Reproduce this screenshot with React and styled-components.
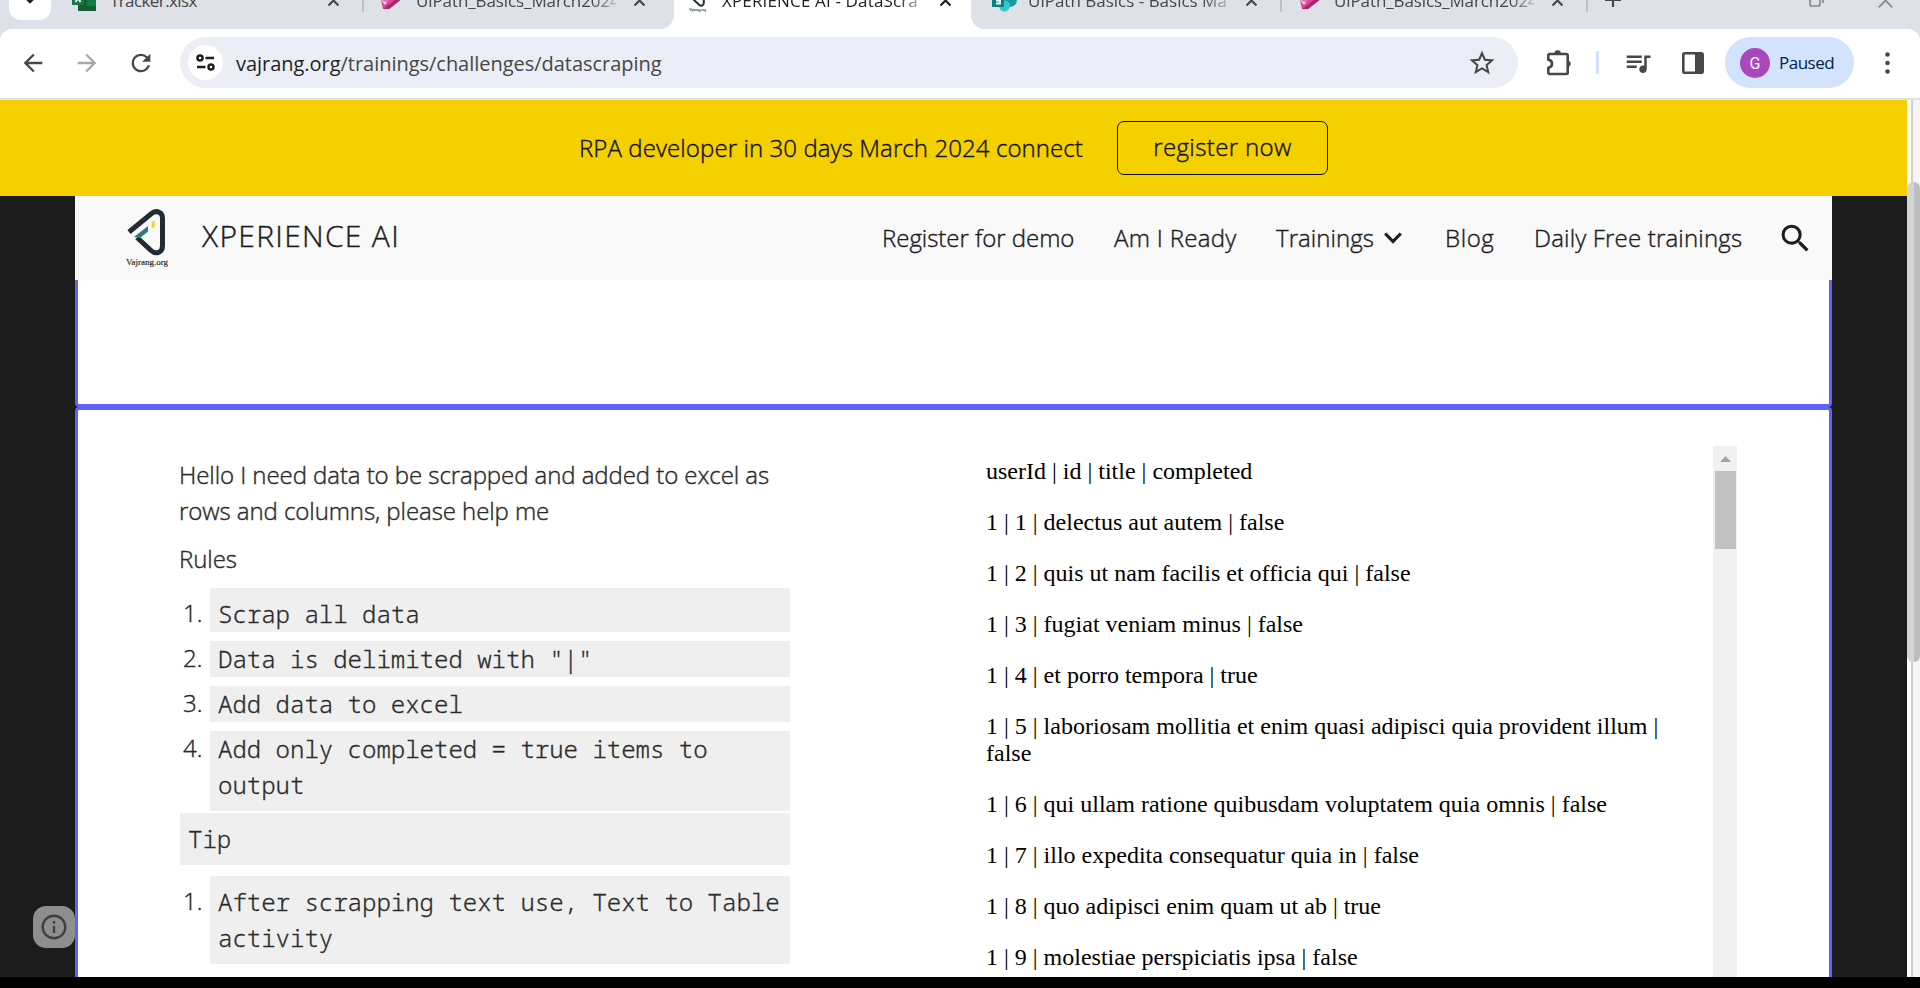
import React from 'react';
import styled, { createGlobalStyle } from 'styled-components';
import { MdArrowBack, MdArrowForward, MdRefresh, MdStarOutline, MdQueueMusic, MdSearch } from 'react-icons/md';

const GlobalStyle = createGlobalStyle`
  * { box-sizing: border-box; }
  body { margin: 0; background: #000; overflow: hidden; }
  svg { display: block; flex: none; }
`;

const Screen = styled.div`
  width: 1920px;
  height: 988px;
  display: flex;
  flex-direction: column;
  overflow: hidden;
  background: #000;
  font-family: "Open Sans", "Noto Sans", sans-serif;
`;

/* ---------- tab strip ---------- */
const TabStrip = styled.div`
  display: flex;
  height: 29px;
  flex: none;
  overflow: hidden;
  background: #fff;
`;
const TabGroup = styled.div`
  display: flex;
  height: 29px;
  background: #dee1e8;
  border-radius: ${p => (p.$side === 'left' ? '0 0 14px 0' : '0 0 0 14px')};
  ${p => (p.$side === 'right' ? 'flex: 1;' : 'width: 674px;')}
`;
const StripRow = styled.div`
  display: flex;
  align-items: center;
  height: 58px;
  margin-top: -29px;
  flex: 1;
`;
const ActiveStripRow = styled(StripRow)`
  flex: none;
  width: 297px;
`;
const TabSearch = styled.div`
  width: 42px;
  height: 40px;
  margin-left: 9px;
  border-radius: 12px;
  background: #fff;
  display: flex;
  align-items: center;
  justify-content: center;
`;
const Tab = styled.div`
  display: flex;
  align-items: center;
  width: ${p => p.$width}px;
  padding-left: ${p => p.$pad}px;
`;
const Favicon = styled.div`
  width: ${p => p.$slot}px;
  flex: none;
`;
const TabTitle = styled.div`
  width: 200px;
  margin-right: 18px;
  padding-top: 2px;
  flex: none;
  overflow: hidden;
  white-space: nowrap;
  font-size: 17px;
  line-height: 30px;
  letter-spacing: ${p => p.$spacing || 0}px;
  color: ${p => (p.$active ? '#1f1f1f' : '#474747')};
  mask-image: ${p => (p.$fade ? 'linear-gradient(to right, #000 176px, transparent 208px)' : 'none')};
`;
const Separator = styled.div`
  width: 2px;
  height: 24px;
  background: #c0c1c3;
`;
const NewTab = styled.div`
  margin-left: 17px;
`;
const WindowControls = styled.div`
  display: flex;
  align-items: center;
  gap: 54px;
  margin-left: auto;
  margin-right: 27px;
`;

/* ---------- toolbar ---------- */
const ToolbarWrap = styled.div`
  background: #dee1e8;
  flex: none;
`;
const Toolbar = styled.div`
  display: flex;
  align-items: center;
  height: 71px;
  padding: 0 19px 2px;
  background: #fff;
  border-bottom: 2px solid #e0e1e3;
  border-radius: 12px 12px 0 0;
  color: #474747;
`;
const NavButtons = styled.div`
  display: flex;
  align-items: center;
  gap: 26px;
  width: 161px;
`;
const Omnibox = styled.div`
  display: flex;
  align-items: center;
  width: 1338px;
  height: 51px;
  padding: 0 21px 0 8px;
  border-radius: 26px;
  background: #ebeef7;
`;
const SiteInfo = styled.div`
  display: flex;
  align-items: center;
  justify-content: center;
  width: 35px;
  height: 35px;
  border-radius: 50%;
  background: #fff;
`;
const Url = styled.div`
  flex: 1;
  padding: 2px 0 0 13px;
  font-size: 20px;
  line-height: 30px;
  letter-spacing: -0.03px;
  color: #474747;
`;
const UrlHost = styled.span`
  color: #1f1f1f;
`;
const ToolIcons = styled.div`
  display: flex;
  align-items: center;
  padding-left: 28px;
`;
const ToolDivider = styled.div`
  width: 3px;
  height: 23px;
  margin: 0 24px 0 24px;
  background: #d3e3fd;
  border-radius: 1px;
`;
const ToolSlot = styled.div`
  width: ${p => p.$width}px;
`;
const ProfileChip = styled.div`
  display: flex;
  align-items: center;
  gap: 9px;
  width: 129px;
  height: 51px;
  padding-left: 15px;
  border-radius: 26px;
  background: #d3e3fd;
  color: #041e49;
  font-size: 17px;
  letter-spacing: -0.5px;
`;
const Avatar = styled.div`
  width: 30px;
  height: 30px;
  border-radius: 50%;
  background: #ab47bc;
  color: #fff;
  font: 16px/31px Roboto, sans-serif;
  letter-spacing: 0;
  text-align: center;
`;
const MenuDots = styled.div`
  margin-left: 31px;
`;

/* ---------- page ---------- */
const Viewport = styled.div`
  display: flex;
  height: 877px;
  flex: none;
  overflow: hidden;
`;
const Page = styled.div`
  position: relative;
  width: 1907px;
  background: #1c1c1c;
`;
const Banner = styled.div`
  display: flex;
  height: 96px;
  padding: 21px 0 0 579px;
  background: #f5d000;
  color: #111;
  font-size: 24px;
  font-weight: 300;
  -webkit-text-stroke: 0.4px;
`;
const BannerText = styled.div`
  width: 538px;
  line-height: 54px;
  letter-spacing: 0.09px;
`;
const RegisterButton = styled.div`
  width: 211px;
  height: 54px;
  border: 1px solid #111;
  border-radius: 7px;
  line-height: 50px;
  text-align: center;
  letter-spacing: 0.38px;
`;
const Column = styled.div`
  padding: 0 75px;
`;
const SiteHeader = styled.div`
  display: flex;
  align-items: center;
  height: 84px;
  padding: 0 18px 0 51px;
  background: #f9f9f9;
  color: #1c1c1c;
  font-weight: 300;
`;
const Brand = styled.div`
  flex: 1;
  padding-left: 34px;
  font-size: 30px;
  line-height: 40px;
  letter-spacing: 1.3px;
  margin-bottom: 4px;
  -webkit-text-stroke: 0.4px;
`;
const Menu = styled.div`
  display: flex;
  align-items: center;
  font-size: 24px;
  line-height: 36px;
`;
const MenuItem = styled.div`
  display: flex;
  align-items: center;
  width: ${p => p.$width}px;
  letter-spacing: ${p => p.$spacing || 0}px;
  white-space: nowrap;
  -webkit-text-stroke: 0.4px;
`;
const Section = styled.div`
  border: 3px solid #6161ff;
  border-radius: 4px;
  background: #fff;
`;
const EmptySection = styled(Section)`
  height: 127px;
  border-top: 0;
  border-radius: 0 0 4px 4px;
`;
const ChallengeSection = styled(Section)`
  display: flex;
  height: 620px;
  padding: 36px 92px 0 102px;
`;
const Instructions = styled.div`
  width: 610px;
  padding-top: 11px;
  color: #2a2a2a;
  font-size: 24px;
  font-weight: 300;
  line-height: 36px;
`;
const Paragraph = styled.p`
  margin: 0 0 12px -1px;
  letter-spacing: -0.07px;
  -webkit-text-stroke: 0.4px;
`;
const Rules = styled.div`
  margin-top: -1px;
`;
const RuleRow = styled.div`
  display: flex;
  align-items: flex-start;
  margin-bottom: ${p => p.$after}px;
`;
const RuleNumber = styled.div`
  width: 30px;
  padding: ${p => (p.$first ? 7 : 0)}px 0 0 3px;
  margin-top: ${p => (p.$first ? 0 : -1)}px;
  letter-spacing: 0.1px;
  -webkit-text-stroke: 0.4px;
`;
const Code = styled.div`
  width: ${p => (p.$wide ? 610 : 580)}px;
  height: ${p => p.$height}px;
  padding: ${p => (p.$first ? 8 : 0)}px 0 0 8px;
  background: #efefef;
  color: #2a2a2a;
  font-family: "Noto Sans Mono", "Liberation Mono", monospace;
  font-weight: 300;
  white-space: pre-wrap;
  -webkit-text-stroke: 0.35px;
`;
const TodoFrame = styled.div`
  display: flex;
  margin-left: auto;
  width: 751px;
`;
const TodoList = styled.div`
  flex: 1;
  padding: 12px 50px 0 0;
  color: #000;
  font: 24px/27px "Liberation Serif", serif;
`;
const Todo = styled.p`
  margin: 0 0 24px;
`;
const FrameScroll = styled.div`
  width: 24px;
  padding: 10px 1px 0 2px;
  background: #f1f1f1;
`;
const FrameThumb = styled.div`
  height: 78px;
  margin-top: 9px;
  background: #c1c1c1;
`;
const PageScroll = styled.div`
  width: 13px;
  padding-top: 82px;
  background: linear-gradient(to right, #fff 4px, #cfcfcf 4px 6px, #f5f5f5 6px);
`;
const PageThumb = styled.div`
  height: 480px;
  border-radius: 6px;
  background: linear-gradient(to right, #d4d4d4 7px, #bdbdbd 7px);
`;
const InfoButton = styled.div`
  position: absolute;
  left: 33px;
  bottom: 29px;
  width: 42px;
  height: 42px;
  border-radius: 13px;
  background: #8e8e8e;
  display: flex;
  align-items: center;
  justify-content: center;
`;

const CloseIcon = ({ size = 11, color = '#474747', width = 2.2 }) => (
  <svg width={size} height={size} viewBox="0 0 11 11">
    <path d="M.5.5l10 10M10.500.5l-10 10" stroke={color} strokeWidth={width} />
  </svg>
);
const ExcelIcon = () => (
  <svg width="24" height="22" viewBox="0 0 24 22">
    <path d="M6 0h18v22H6z" fill="#21a366" />
    <path d="M6 11h9v11H6z" fill="#185c37" />
    <path d="M15 11h9v11h-9z" fill="#107c41" />
    <path d="M6 17h18v5H6z" fill="#185c37" />
    <path d="M0 0h12v16H0z" fill="#107c41" />
    <path d="M3.500 5.500l5 7.500M8.500 5.500l-5 7.500" stroke="#fff" strokeWidth="1.900" />
  </svg>
);
const FlowIcon = () => (
  <svg width="22" height="19" viewBox="0 0 22 19">
    <path d="M0 9L9 0h12L9 13z" fill="#f06bb3" />
    <path d="M0 9l4 5L15 0h7v7L8 18H2z" fill="#e0449a" />
    <path d="M2 18L22 3v4L8 18z" fill="#a8286a" />
  </svg>
);
const SharePointIcon = () => (
  <svg width="25" height="24" viewBox="0 0 25 24">
    <circle cx="12" cy="7" r="7" fill="#036c70" />
    <circle cx="18" cy="12" r="7" fill="#1a9ba1" />
    <circle cx="12.500" cy="18" r="5.500" fill="#37c6d0" />
    <path d="M0 6h12v13H0z" fill="#038387" />
    <path d="M8 9.500H5v3h3v3H4" fill="none" stroke="#fff" strokeWidth="1.800" />
  </svg>
);
const BrandMark = ({ width }) => (
  <svg width={width} height={(width * 58) / 42} viewBox="0 0 42 58">
    <path d="M3 23L25.500 4.500C31 .5 36.500 3.500 36.500 9v28c0 6.500-6.500 9-11.500 4.500L11 28.500" fill="none" stroke="#212b36" strokeWidth="5" />
    <path d="M8 28L22 17v5.500L14 29z" fill="#2f7d78" />
    <path d="M25.700 13l3-1.500v6l-3 2z" fill="#f2d21b" />
    <text x="0" y="56" fontFamily="Liberation Serif" fontSize="9" fill="#222" stroke="#222" strokeWidth=".15" textLength="42" lengthAdjust="spacingAndGlyphs">Vajrang.org</text>
  </svg>
);
const TuneIcon = () => (
  <svg width="19" height="19" viewBox="0 0 19 19" fill="none" stroke="#1f1f1f" strokeWidth="2.500">
    <circle cx="4" cy="5" r="2.500" />
    <path d="M9.500 5H18M1 14h8.500" />
    <circle cx="15" cy="14" r="2.500" />
  </svg>
);
const ExtensionIcon = () => (
  <svg width="26" height="26" viewBox="0 0 26 26">
    <path d="M3.500 4h17a1.200 1.200 0 011.200 1.200v17.600a1.200 1.200 0 01-1.200 1.200h-17a1.200 1.200 0 01-1.200-1.200V18c5-1.500 5-7 0-8.500V5.200A1.200 1.200 0 013.500 4z" fill="none" stroke="#474747" strokeWidth="2.600" />
    <path d="M8.300 3.500a3.300 3.300 0 016.600 0zM22.200 10.500a3.400 3.400 0 010 6.600z" fill="#474747" />
  </svg>
);
const SidePanelIcon = () => (
  <svg width="22" height="22" viewBox="0 0 22 22">
    <rect x="1.300" y="1.300" width="19.400" height="19.400" rx="1.500" fill="none" stroke="#474747" strokeWidth="2.600" />
    <path d="M13 1h8v20h-8z" fill="#474747" />
  </svg>
);

const rules = [
  { text: 'Scrap all data', height: 44, after: 9, first: true },
  { text: 'Data is delimited with "|"', height: 36, after: 9 },
  { text: 'Add data to excel', height: 36, after: 9 },
  { text: 'Add only completed = true items to\noutput', height: 80, after: 2 },
];
const todos = [
  'userId | id | title | completed',
  '1 | 1 | delectus aut autem | false',
  '1 | 2 | quis ut nam facilis et officia qui | false',
  '1 | 3 | fugiat veniam minus | false',
  '1 | 4 | et porro tempora | true',
  '1 | 5 | laboriosam mollitia et enim quasi adipisci quia provident illum | false',
  '1 | 6 | qui ullam ratione quibusdam voluptatem quia omnis | false',
  '1 | 7 | illo expedita consequatur quia in | false',
  '1 | 8 | quo adipisci enim quam ut ab | true',
  '1 | 9 | molestiae perspiciatis ipsa | false',
];

export default function App() {
  return (
    <Screen>
      <GlobalStyle />
      <TabStrip>
        <TabGroup $side="left">
          <StripRow>
            <TabSearch>
              <svg width="12" height="8" viewBox="0 0 12 8"><path d="M1 1l5 5 5-5" fill="none" stroke="#1f1f1f" strokeWidth="2.400" /></svg>
            </TabSearch>
            <Tab $width={311} $pad={21}>
              <Favicon $slot={38}><ExcelIcon /></Favicon>
              <TabTitle $spacing={-0.6}>Tracker.xlsx</TabTitle>
              <CloseIcon />
            </Tab>
            <Separator />
            <Tab $width={310} $pad={17}>
              <Favicon $slot={35}><FlowIcon /></Favicon>
              <TabTitle $fade $spacing={-0.1}>UiPath_Basics_March2024</TabTitle>
              <CloseIcon />
            </Tab>
          </StripRow>
        </TabGroup>
        <ActiveStripRow>
          <Tab $width={297} $pad={15}>
            <Favicon $slot={33}><BrandMark width={17} /></Favicon>
            <TabTitle $fade $active $spacing={0.15}>XPERIENCE AI - DataScra</TabTitle>
            <CloseIcon color="#1f1f1f" />
          </Tab>
        </ActiveStripRow>
        <TabGroup $side="right">
          <StripRow>
            <Tab $width={309} $pad={21}>
              <Favicon $slot={36}><SharePointIcon /></Favicon>
              <TabTitle $fade>UiPath Basics - Basics Ma</TabTitle>
              <CloseIcon />
            </Tab>
            <Separator />
            <Tab $width={304} $pad={18}>
              <Favicon $slot={34}><FlowIcon /></Favicon>
              <TabTitle $fade $spacing={-0.1}>UiPath_Basics_March2024</TabTitle>
              <CloseIcon />
            </Tab>
            <Separator />
            <NewTab>
              <svg width="16" height="14" viewBox="0 0 16 14"><path d="M8 0v14M0 7h16" stroke="#474747" strokeWidth="2.200" /></svg>
            </NewTab>
            <WindowControls>
              <svg width="15" height="13" viewBox="0 0 15 13" fill="none" stroke="#888b90" strokeWidth="1.700">
                <rect x="1" y="2.500" width="10" height="9.500" rx="2" /><path d="M4 1h7q3 0 3 3v5" />
              </svg>
              <CloseIcon size={15} color="#888b90" width={1.3} />
            </WindowControls>
          </StripRow>
        </TabGroup>
      </TabStrip>

      <ToolbarWrap>
        <Toolbar>
          <NavButtons>
            <MdArrowBack size={28} />
            <MdArrowForward size={28} color="#a9a9a9" />
            <MdRefresh size={28} />
          </NavButtons>
          <Omnibox>
            <SiteInfo><TuneIcon /></SiteInfo>
            <Url><UrlHost>vajrang.org</UrlHost>/trainings/challenges/datascraping</Url>
            <MdStarOutline size={30} />
          </Omnibox>
          <ToolIcons>
            <ExtensionIcon />
            <ToolDivider />
            <ToolSlot $width={59}><MdQueueMusic size={30} /></ToolSlot>
            <ToolSlot $width={43}><SidePanelIcon /></ToolSlot>
            <ProfileChip><Avatar>G</Avatar>Paused</ProfileChip>
          </ToolIcons>
          <MenuDots>
            <svg width="5" height="22" viewBox="0 0 5 22" fill="#474747">
              <circle cx="2.500" cy="2.500" r="2.300" /><circle cx="2.500" cy="11" r="2.300" /><circle cx="2.500" cy="19.500" r="2.300" />
            </svg>
          </MenuDots>
        </Toolbar>
      </ToolbarWrap>

      <Viewport>
        <Page>
          <Banner>
            <BannerText>RPA developer in 30 days March 2024 connect</BannerText>
            <RegisterButton>register now</RegisterButton>
          </Banner>
          <Column>
            <SiteHeader>
              <BrandMark width={42} />
              <Brand>XPERIENCE AI</Brand>
              <Menu>
                <MenuItem $width={232} $spacing={-0.03}>Register for demo</MenuItem>
                <MenuItem $width={162} $spacing={0.3}>Am I Ready</MenuItem>
                <MenuItem $width={108} $spacing={0.05}>Trainings</MenuItem>
                <MenuItem $width={61}>
                  <svg width="18" height="12" viewBox="0 0 18 12"><path d="M1.200 1.500L9 9.500l7.800-8" fill="none" stroke="#1c1c1c" strokeWidth="3.200" /></svg>
                </MenuItem>
                <MenuItem $width={89} $spacing={0.6}>Blog</MenuItem>
                <MenuItem $width={243} $spacing={0.18}>Daily Free trainings</MenuItem>
                <MdSearch size={37} />
              </Menu>
            </SiteHeader>
            <EmptySection />
            <ChallengeSection>
              <Instructions>
                <Paragraph>Hello I need data to be scrapped and added to excel as<br />rows and columns, please help me</Paragraph>
                <Paragraph>Rules</Paragraph>
                <Rules>
                  {rules.map((r, i) => (
                    <RuleRow key={r.text} $after={r.after}>
                      <RuleNumber $first={r.first}>{i + 1}.</RuleNumber>
                      <Code $height={r.height} $first={r.first}>{r.text}</Code>
                    </RuleRow>
                  ))}
                  <RuleRow $after={11}>
                    <Code $wide $first $height={52}>Tip</Code>
                  </RuleRow>
                  <RuleRow $after={0}>
                    <RuleNumber $first>1.</RuleNumber>
                    <Code $first $height={88}>{'After scrapping text use, Text to Table\nactivity'}</Code>
                  </RuleRow>
                </Rules>
              </Instructions>
              <TodoFrame>
                <TodoList>
                  {todos.map(t => <Todo key={t}>{t}</Todo>)}
                </TodoList>
                <FrameScroll>
                  <svg width="21" height="6" viewBox="0 0 21 6"><path d="M10.500 0L16 6H5z" fill="#a3a3a3" /></svg>
                  <FrameThumb />
                </FrameScroll>
              </TodoFrame>
            </ChallengeSection>
          </Column>
          <InfoButton>
            <svg width="26" height="26" viewBox="0 0 26 26" fill="none" stroke="#3c4043" strokeWidth="2.400">
              <circle cx="13" cy="13" r="11.300" /><path d="M13 11.800v7.200M13 7v2.600" />
            </svg>
          </InfoButton>
        </Page>
        <PageScroll><PageThumb /></PageScroll>
      </Viewport>
    </Screen>
  );
}
